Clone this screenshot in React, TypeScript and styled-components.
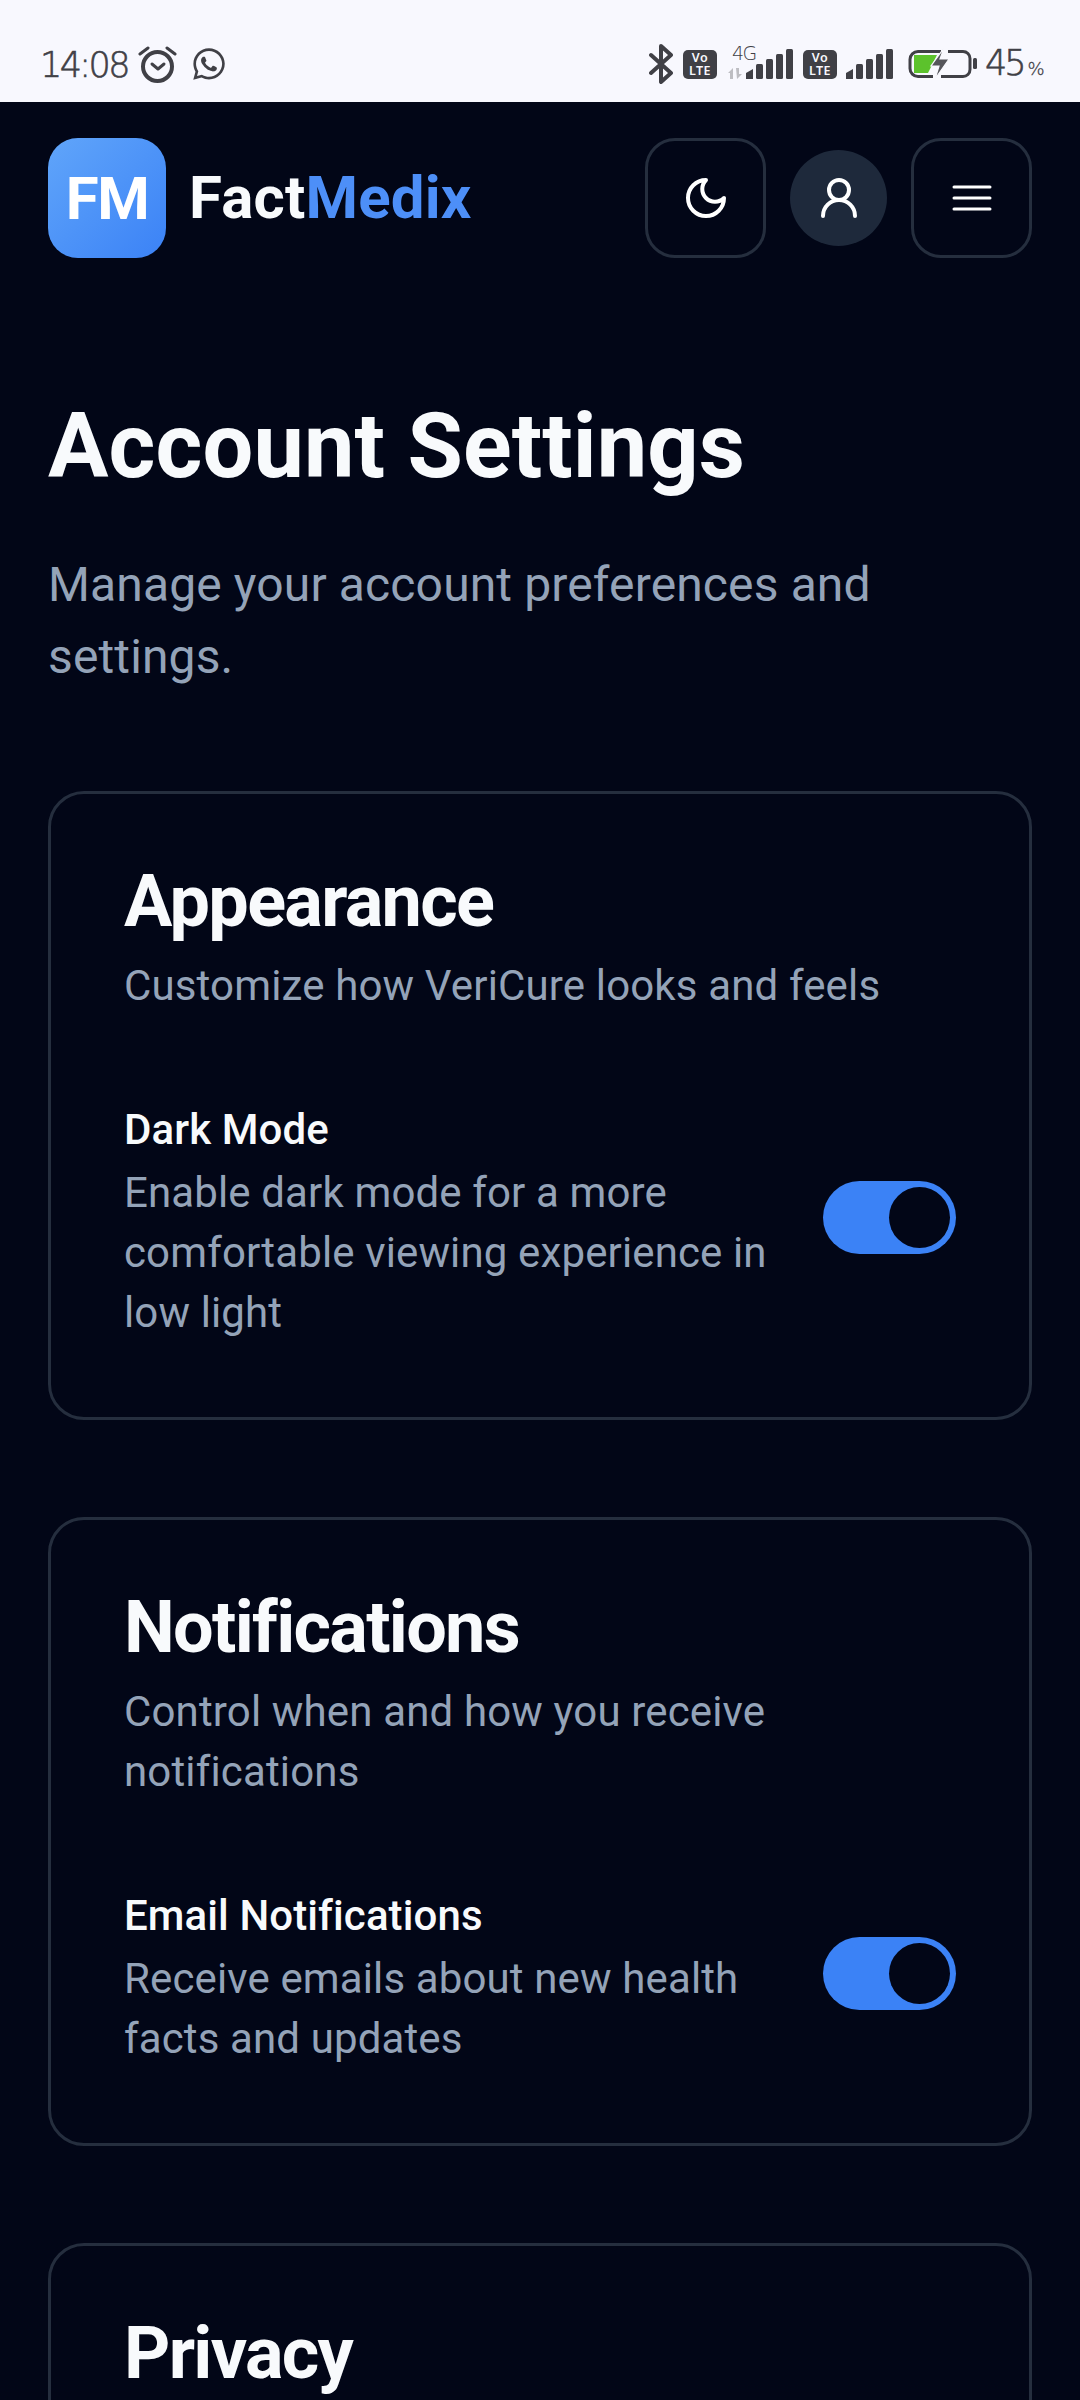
import styled, { createGlobalStyle } from 'styled-components'
import { FaWhatsapp } from 'react-icons/fa'

const GlobalStyle = createGlobalStyle`
  html, body {
    margin: 0;
    padding: 0;
    background: #020617;
  }
  * {
    box-sizing: border-box;
  }
`

const Page = styled.div`
  width: 1080px;
  height: 2400px;
  overflow: hidden;
  background: #020617;
  font-family: Roboto, 'Noto Sans', sans-serif;
  color: #f8fafc;
`

const StatusBar = styled.div`
  height: 102px;
  background: #f8f8fe;
  display: flex;
  align-items: center;
  justify-content: space-between;
  padding: 26px 40px 0 40px;
  color: #404046;
`

const StatusGroup = styled.div`
  display: flex;
  align-items: center;
  gap: ${(p: { $gap: number }) => p.$gap}px;
`

const Clock = styled.span`
  margin-top: 2px;
  font-family: 'DejaVu Sans', sans-serif;
  font-weight: 200;
  font-size: 35px;
  line-height: 36px;
  letter-spacing: -2.6px;
  width: 90px;
  -webkit-text-stroke: 0.6px #404046;
`

const WhatsappIcon = styled(FaWhatsapp)`
  width: 36px;
  height: 36px;
  margin-left: 5px;
`

const VoLte = styled.div`
  width: 34px;
  height: 29px;
  border-radius: 5px;
  background: #404046;
  color: #f8f8fe;
  font-family: 'Noto Sans', sans-serif;
  font-weight: 600;
  font-size: 12.5px;
  line-height: 13px;
  letter-spacing: 0.5px;
  text-align: center;
  padding-top: 1px;
`

const NetworkSignal = styled.div`
  position: relative;
  display: flex;
  margin-left: ${(p: { $offset?: number }) => p.$offset ?? 0}px;
`

const FourG = styled.span`
  position: absolute;
  left: 5px;
  top: -4px;
  font-family: 'DejaVu Sans', sans-serif;
  font-weight: 200;
  font-size: 19px;
  line-height: 16px;
  letter-spacing: -1.5px;
`

const BatteryWrap = styled.div`
  display: flex;
  margin-left: 5px;
`

const Percent = styled.span`
  width: 55px;
  margin: 4px 0 0 -2px;
  font-family: 'DejaVu Sans', sans-serif;
  font-weight: 200;
  font-size: 35px;
  line-height: 36px;
  letter-spacing: -3px;
  white-space: nowrap;
  -webkit-text-stroke: 0.6px #404046;

  small {
    margin-left: 4px;
    font-size: 18px;
    letter-spacing: -1px;
    -webkit-text-stroke: 0.3px #404046;
  }
`

const Header = styled.header`
  display: flex;
  align-items: center;
  justify-content: space-between;
  padding: 36px 48px 39px 48px;
`

const Brand = styled.div`
  display: flex;
  align-items: center;
  gap: 24px;
`

const LogoMark = styled.div`
  width: 118px;
  height: 120px;
  border-radius: 30px;
  background: linear-gradient(135deg, #60a5fa, #3b82f6);
  display: flex;
  align-items: center;
  justify-content: center;
  color: #ffffff;
  font-weight: 700;
  font-size: 60px;
  letter-spacing: -1.5px;
`

const BrandName = styled.span`
  margin-left: -1px;
  font-weight: 700;
  font-size: 60px;
  line-height: 84px;
  letter-spacing: 0.2px;

  em {
    font-style: normal;
    color: #4d8ff8;
  }
`

const HeaderActions = styled.div`
  display: flex;
  align-items: center;
  gap: 24px;
`

const IconButton = styled.button`
  width: 121px;
  height: 120px;
  padding: 0;
  border-radius: 30px;
  border: 3px solid #252e3e;
  background: transparent;
  color: #ffffff;
  display: flex;
  align-items: center;
  justify-content: center;
`

const AvatarButton = styled.button`
  width: 97px;
  height: 96px;
  padding: 0;
  border: 0;
  border-radius: 50%;
  background: #1e293b;
  color: #ffffff;
  display: flex;
  align-items: center;
  justify-content: center;
`

const Main = styled.main`
  padding: 96px 48px 0;
`

const PageTitle = styled.h1`
  margin: 0 0 48px;
  font-size: 90px;
  line-height: 108px;
  font-weight: 700;
  letter-spacing: 0.1px;
`

const Lead = styled.p`
  margin: 0 0 98px;
  font-size: 48px;
  line-height: 72px;
  letter-spacing: 0.13px;
  color: #94a3b8;
`

const Cards = styled.div`
  display: flex;
  flex-direction: column;
  gap: 97px;
`

const Card = styled.section`
  border: 3px solid #252e3e;
  border-radius: 36px;
  padding: 72px 73px 74px 73px;
  min-height: 300px;
`

const CardTitle = styled.h2`
  margin: 0;
  font-size: 72px;
  line-height: 72px;
  font-weight: 700;
  letter-spacing: -1.7px;
`

const CardSubtitle = styled.p`
  margin: 18px 0 0;
  font-size: 42px;
  line-height: 60px;
  letter-spacing: 0.15px;
  color: #94a3b8;
`

const SettingRow = styled.div`
  margin-top: 84px;
  display: flex;
  align-items: center;
  justify-content: space-between;
  gap: 48px;
`

const SettingLabel = styled.div`
  margin-bottom: 3px;
  font-size: 42px;
  line-height: 60px;
  font-weight: 500;
  letter-spacing: 0.1px;
`

const SettingText = styled.div`
  font-size: 42px;
  line-height: 60px;
  letter-spacing: 0.13px;
  color: #94a3b8;
`

const Toggle = styled.div`
  flex: none;
  width: 133px;
  height: 73px;
  margin-bottom: 9px;
  border-radius: 37px;
  background: #3b82f6;
  display: flex;
  align-items: center;
  justify-content: flex-end;
  padding-right: 6px;
`

const ToggleKnob = styled.div`
  width: 61px;
  height: 61px;
  border-radius: 50%;
  background: #020617;
`

const MoonIcon = () => (
  <svg width="48" height="48" viewBox="0 0 24 24" fill="none" stroke="currentColor" strokeWidth="2" strokeLinecap="round" strokeLinejoin="round">
    <path d="M12 3a6 6 0 0 0 9 9 9 9 0 1 1-9-9Z" />
  </svg>
)

const UserIcon = () => (
  <svg width="48" height="48" viewBox="0 0 24 24" fill="none" stroke="currentColor" strokeWidth="2" strokeLinecap="round" strokeLinejoin="round">
    <circle cx="12" cy="8" r="5" />
    <path d="M20 21a8 8 0 0 0-16 0" />
  </svg>
)

const MenuIcon = () => (
  <svg width="48" height="48" viewBox="0 0 48 48" fill="none" stroke="currentColor" strokeWidth="3" strokeLinecap="round">
    <path d="M6 13h36M6 24h36M6 35h36" />
  </svg>
)

const AlarmIcon = () => (
  <svg width="40" height="37" viewBox="0 0 40 37" fill="none" stroke="currentColor" strokeLinecap="round" strokeLinejoin="round">
    <circle cx="19.5" cy="20.5" r="14.5" strokeWidth="4" />
    <path d="M14 18l6 5 6-5" strokeWidth="3" />
    <path d="M2 8l8-6M37 8l-8-6" strokeWidth="3" />
  </svg>
)

const BluetoothIcon = () => (
  <svg width="24" height="40" viewBox="0 0 24 40" fill="none" stroke="currentColor" strokeWidth="4" strokeLinecap="round" strokeLinejoin="round">
    <path d="M2 11l20 18-10 9V2l10 9L2 29" />
  </svg>
)

const SignalBars = ({ arrows }: { arrows?: boolean }) => (
  <svg width={arrows ? 66 : 48} height="30" viewBox={arrows ? '0 0 66 30' : '18 0 48 30'} fill="#404046">
    {arrows && <path d="M1 24l5-5v11H3v-6zM9 19h3v6h3l-5 5z" fill="#bdbdc2" />}
    <path d="M19 24l7-4v10h-7z" />
    <rect x="29" y="15" width="7" height="15" rx="1.5" />
    <rect x="39" y="10" width="7" height="20" rx="1.5" />
    <rect x="49" y="5" width="7" height="25" rx="1.5" />
    <rect x="59" y="0" width="7" height="30" rx="1.5" />
  </svg>
)

const BatteryIcon = () => (
  <svg width="69" height="32" viewBox="0 0 69 32" fill="none">
    <path d="M33 3.5H10a8 8 0 0 0-8 8v9a8 8 0 0 0 8 8h15M33 28.5h22a7 7 0 0 0 7-7v-11a7 7 0 0 0-7-7H40" stroke="#404046" strokeWidth="3" />
    <path d="M6 7h23l-9 18H6z" fill="#5cc22c" />
    <path d="M36 0L23 18h8l-4 13 14-20h-9l4-11z" fill="#55555b" stroke="#f8f8fe" strokeWidth="1.2" />
    <rect x="65" y="10" width="4" height="11" rx="1.5" fill="#404046" />
  </svg>
)

function Setting({ label, text }: { label: string; text: string }) {
  return (
    <SettingRow>
      <div>
        <SettingLabel>{label}</SettingLabel>
        <SettingText>{text}</SettingText>
      </div>
      <Toggle>
        <ToggleKnob />
      </Toggle>
    </SettingRow>
  )
}

export default function App() {
  return (
    <Page>
      <GlobalStyle />
      <StatusBar>
        <StatusGroup $gap={8}>
          <Clock>14:08</Clock>
          <AlarmIcon />
          <WhatsappIcon />
        </StatusGroup>
        <StatusGroup $gap={10}>
          <BluetoothIcon />
          <VoLte>Vo<br />LTE</VoLte>
          <NetworkSignal>
            <FourG>4G</FourG>
            <SignalBars arrows />
          </NetworkSignal>
          <VoLte>Vo<br />LTE</VoLte>
          <NetworkSignal $offset={-2}>
            <SignalBars />
          </NetworkSignal>
          <BatteryWrap>
            <BatteryIcon />
          </BatteryWrap>
          <Percent>45<small>%</small></Percent>
        </StatusGroup>
      </StatusBar>
      <Header>
        <Brand>
          <LogoMark>FM</LogoMark>
          <BrandName>Fact<em>Medix</em></BrandName>
        </Brand>
        <HeaderActions>
          <IconButton><MoonIcon /></IconButton>
          <AvatarButton><UserIcon /></AvatarButton>
          <IconButton><MenuIcon /></IconButton>
        </HeaderActions>
      </Header>
      <Main>
        <PageTitle>Account Settings</PageTitle>
        <Lead>Manage your account preferences and settings.</Lead>
        <Cards>
          <Card>
            <CardTitle>Appearance</CardTitle>
            <CardSubtitle>Customize how VeriCure looks and feels</CardSubtitle>
            <Setting label="Dark Mode" text="Enable dark mode for a more comfortable viewing experience in low light" />
          </Card>
          <Card>
            <CardTitle>Notifications</CardTitle>
            <CardSubtitle>Control when and how you receive notifications</CardSubtitle>
            <Setting label="Email Notifications" text="Receive emails about new health facts and updates" />
          </Card>
          <Card>
            <CardTitle>Privacy</CardTitle>
          </Card>
        </Cards>
      </Main>
    </Page>
  )
}
